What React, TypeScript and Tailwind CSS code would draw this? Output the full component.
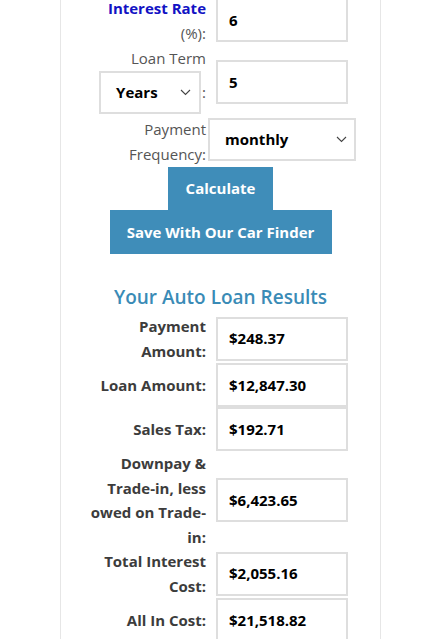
import React from 'react';

const Chevron: React.FC = () => (
  <svg width="11" height="7" viewBox="0 0 11 7" fill="none" className="shrink-0">
    <path d="M1 1l4.5 4.5L10 1" stroke="#444" strokeWidth="1.1" />
  </svg>
);

const Box: React.FC<{ value: string; className?: string }> = ({ value, className }) => (
  <div
    className={
      'flex h-[44px] w-[132px] items-center border-2 border-[#dedede] bg-white pl-[11px] text-[15px] font-bold text-black ' +
      (className ?? '')
    }
  >
    {value}
  </div>
);

const results: { label: string; value: string }[] = [
  { label: 'Payment Amount:', value: '$248.37' },
  { label: 'Loan Amount:', value: '$12,847.30' },
  { label: 'Sales Tax:', value: '$192.71' },
  { label: 'Downpay & Trade-in, less owed on Trade-in:', value: '$6,423.65' },
  { label: 'Total Interest Cost:', value: '$2,055.16' },
  { label: 'All In Cost:', value: '$21,518.82' },
];

export default function App() {
  return (
    <div className="h-[639px] w-[422px] overflow-hidden bg-white font-['Open_Sans',sans-serif]">
      <div className="ml-[60px] flex h-full w-[321px] flex-col border-x border-[#e6e6e6]">
        <div className="flex flex-col">
          {/* Interest rate */}
          <div className="flex items-start">
            <div className="ml-[25px] flex w-[120px] flex-col items-end text-[15px] text-[#555]">
              <span className="font-bold leading-[17px] text-[#1212c4]">Interest Rate</span>
              <span className="mt-[4px] leading-[25px]">(%):</span>
            </div>
            <Box value="6" className="ml-[10px] mt-[-2px]" />
          </div>

          {/* Loan term */}
          <div className="flex items-start">
            <div className="ml-[25px] flex w-[120px] flex-col items-end text-[15px] leading-[25px] text-[#555]">
              <span>Loan Term</span>
              <div className="flex items-center">
                <div className="flex h-[43px] w-[102px] items-center justify-between border-2 border-[#dedede] bg-white pl-[15px] pr-[8px] text-[15px] font-bold text-black">
                  Years
                  <Chevron />
                </div>
                <span className="ml-[1px]">:</span>
              </div>
            </div>
            <Box value="5" className="ml-[10px] mt-[14px]" />
          </div>

          {/* Payment frequency */}
          <div className="mt-[3px] flex items-start">
            <div className="ml-[25px] w-[120px] text-right text-[15px] leading-[25px] text-[#555]">
              Payment
              <br />
              Frequency:
            </div>
            <div className="ml-[2px] mt-[1px] flex h-[43px] w-[148px] items-center justify-between border-2 border-[#dedede] bg-white pl-[15px] pr-[7px] text-[15px] font-bold text-black">
              monthly
              <Chevron />
            </div>
          </div>
        </div>

        {/* Buttons */}
        <div className="flex flex-col items-center">
          <button className="h-[43px] w-[105px] bg-[#3f8db9] text-[15px] font-bold text-white">Calculate</button>
          <button className="h-[44px] w-[222px] bg-[#3f8db9] text-[15px] font-bold text-white">
            Save With Our Car Finder
          </button>
        </div>

        <h2 className="mt-[30px] text-center text-[19px] font-semibold leading-[26px] text-[#3a8bb6]">
          Your Auto Loan Results
        </h2>

        <div className="mt-[4px] flex flex-col">
          {results.map((r) => (
            <div key={r.label} className="flex items-center">
              <div className="ml-[25px] w-[120px] text-right text-[15px] font-bold leading-[24.5px] text-[#3c3c3c]">
                {r.label}
              </div>
              <Box value={r.value} className="ml-[10px]" />
            </div>
          ))}
        </div>
      </div>
    </div>
  );
}
